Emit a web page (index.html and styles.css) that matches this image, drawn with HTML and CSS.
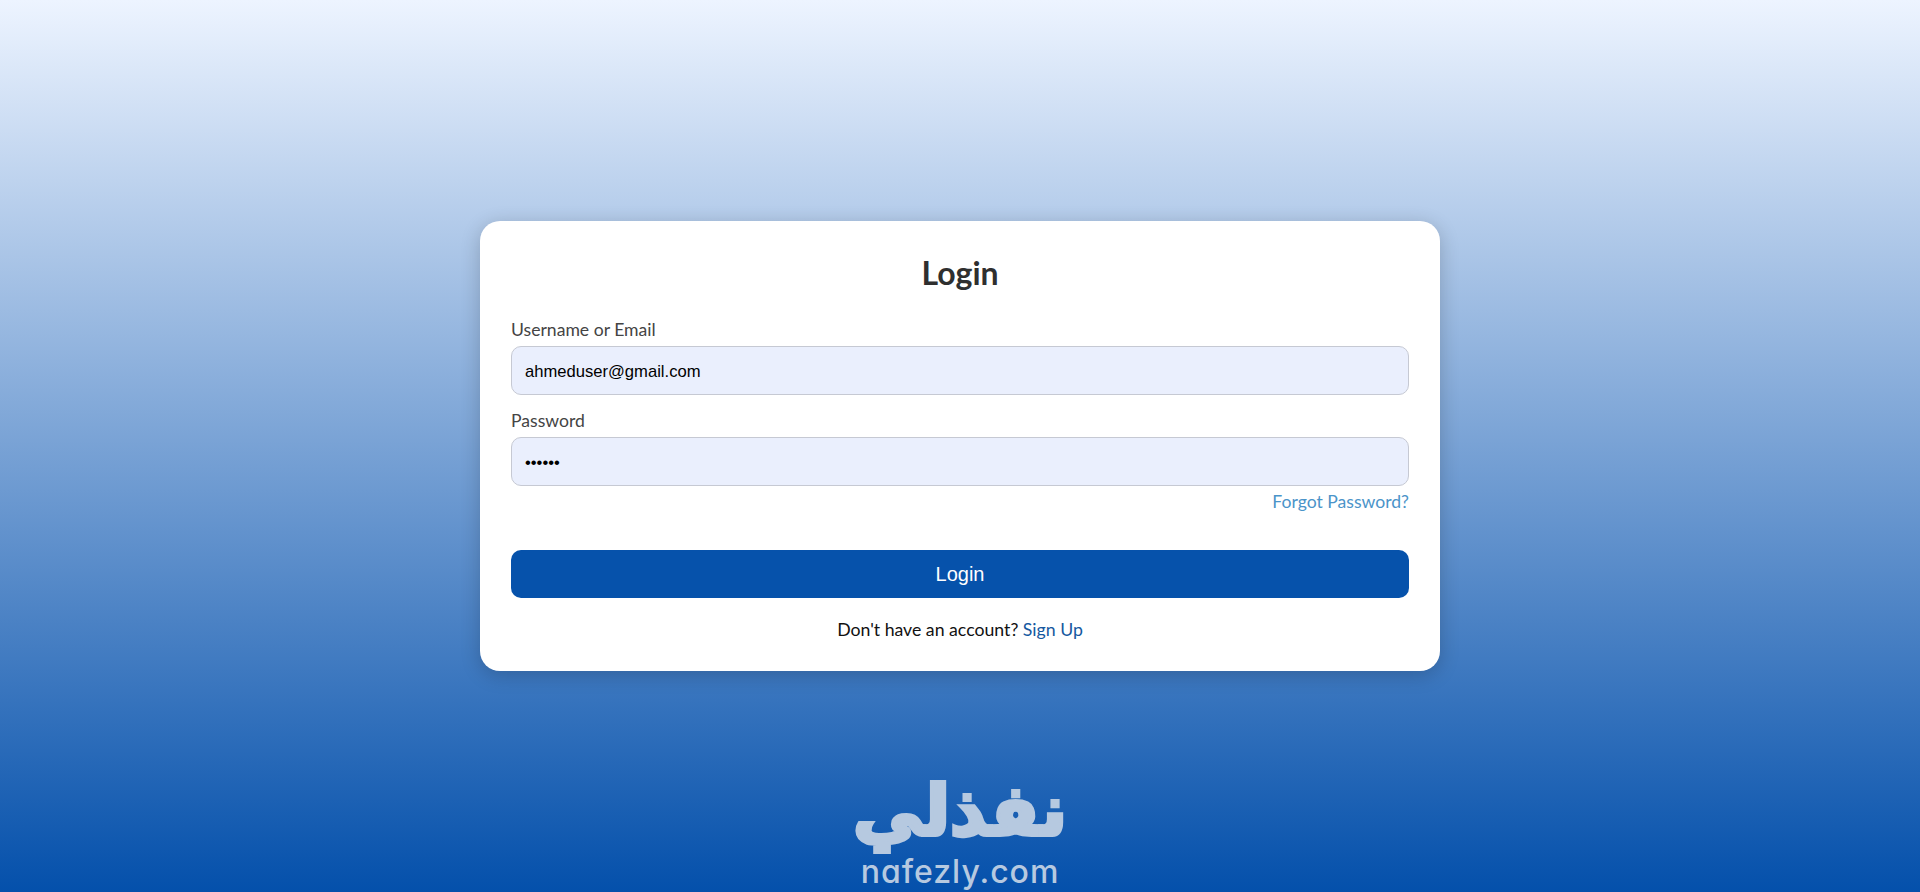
FILE: index.html
```html
<!DOCTYPE html>
<html lang="en">
<head>
    <meta charset="UTF-8">
    <meta name="viewport" content="width=device-width, initial-scale=1.0">
    <title>Login</title>
    <link rel="stylesheet" href="styles.css">
</head>
<body>

    <div class="login-card">
        <h1>Login</h1>
        <form>
            <label for="username">Username or Email</label>
            <input type="text" id="username" value="ahmeduser@gmail.com">
            <label for="password">Password</label>
            <input type="password" id="password" value="123456">
            <div class="forgot"><a href="#">Forgot Password?</a></div>
            <button type="button">Login</button>
        </form>
        <p class="signup">Don't have an account? <a href="#">Sign Up</a></p>
    </div>

    <div class="logo">
        <div class="logo-ar" lang="ar" dir="rtl">نفذلي</div>
        <div class="logo-en">nafezly.com</div>
    </div>

</body>
</html>
```

FILE: styles.css
```css
html, body { margin: 0; height: 100%; }
body {
    height: 892px;
    overflow: hidden;
    display: flex;
    flex-direction: column;
    align-items: center;
    background: linear-gradient(to bottom, #edf4ff, #0450ab);
    font-family: Lato, "Open Sans", sans-serif;
}
.login-card {
    box-sizing: border-box;
    width: 960px;
    height: 450px;
    margin-top: 221px;
    padding: 33px 31px 0;
    background: #fff;
    border-radius: 20px;
    box-shadow: 0 4px 20px rgba(0, 0, 0, 0.2);
}
h1 {
    margin: 0 0 27px;
    text-align: center;
    font-size: 32px;
    line-height: 38px;
    font-weight: 700;
    color: #2f2f2f;
}
label {
    display: block;
    font-size: 17.6px;
    line-height: 22px;
    margin-bottom: 5px;
    color: #444;
}
input {
    display: block;
    box-sizing: border-box;
    width: 100%;
    height: 49px;
    padding: 2px 13px 0;
    margin-bottom: 15px;
    border: 1px solid #c6c9d3;
    border-radius: 10px;
    background: #eaeffd;
    font-family: "Liberation Sans", Arial, sans-serif;
    font-size: 16.6px;
    color: #000;
}
#password { margin-bottom: 0; }
.forgot {
    text-align: right;
    font-size: 17.6px;
    line-height: 22px;
    margin-top: 5px;
    margin-bottom: 37px;
}
.forgot a { color: #4b94c9; text-decoration: none; }
button {
    display: block;
    width: 100%;
    height: 48px;
    border: none;
    border-radius: 10px;
    background: #0652ab;
    color: #fff;
    font-family: "Liberation Sans", Arial, sans-serif;
    font-size: 20px;
}
.signup {
    margin: 21px 0 0;
    text-align: center;
    font-size: 17.7px;
    line-height: 22px;
    color: #111;
}
.signup a { color: #15589f; text-decoration: none; }
.logo {
    margin-top: 99px;
    text-align: center;
    color: #b6c9e0;
}
.logo-ar {
    font-family: "DejaVu Sans", sans-serif;
    font-weight: bold;
    font-size: 70px;
    line-height: normal;
    -webkit-text-stroke: 4px #b6c9e0;
}
.logo-en {
    font-family: Inter, "DejaVu Sans", sans-serif;
    font-feature-settings: "cv11";
    font-size: 32px;
    font-weight: 500;
    line-height: 40px;
    letter-spacing: 1px;
}
```
